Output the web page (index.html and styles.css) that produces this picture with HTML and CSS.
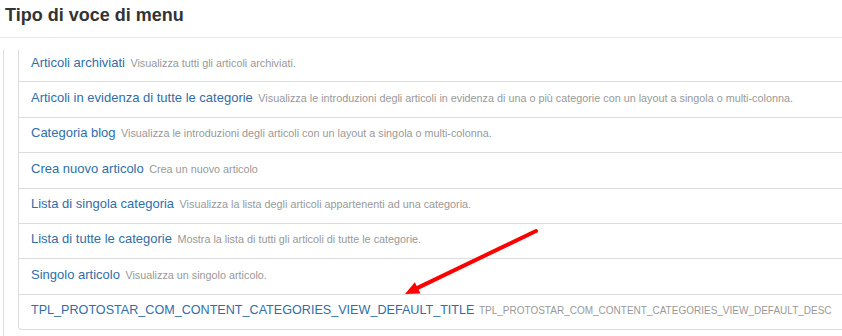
FILE: index.html
```html
<!DOCTYPE html>
<html lang="it">
<head>
<meta charset="utf-8">
<title>Tipo di voce di menu</title>
<link rel="stylesheet" href="styles.css">
</head>
<body>
<div class="page">
  <h3 class="modal-title">Tipo di voce di menu</h3>
  <div class="outer">
    <ul class="menu-types">
      <li class="item first"><a class="link" href="#">Articoli archiviati</a> <small class="desc">Visualizza tutti gli articoli archiviati.</small></li>
      <li class="item"><a class="link" href="#">Articoli in evidenza di tutte le categorie</a> <small class="desc">Visualizza le introduzioni degli articoli in evidenza di una o più categorie con un layout a singola o multi-colonna.</small></li>
      <li class="item"><a class="link" href="#">Categoria blog</a> <small class="desc">Visualizza le introduzioni degli articoli con un layout a singola o multi-colonna.</small></li>
      <li class="item"><a class="link" href="#">Crea nuovo articolo</a> <small class="desc">Crea un nuovo articolo</small></li>
      <li class="item"><a class="link" href="#">Lista di singola categoria</a> <small class="desc">Visualizza la lista degli articoli appartenenti ad una categoria.</small></li>
      <li class="item"><a class="link" href="#">Lista di tutte le categorie</a> <small class="desc">Mostra la lista di tutti gli articoli di tutte le categorie.</small></li>
      <li class="item"><a class="link" href="#">Singolo articolo</a> <small class="desc">Visualizza un singolo articolo.</small></li>
      <li class="item item-key"><a class="link" href="#">TPL_PROTOSTAR_COM_CONTENT_CATEGORIES_VIEW_DEFAULT_TITLE</a> <small class="desc">TPL_PROTOSTAR_COM_CONTENT_CATEGORIES_VIEW_DEFAULT_DESC</small></li>
    </ul>
  </div>
  <svg class="arrow" width="842" height="336" viewBox="0 0 842 336" aria-hidden="true">
    <line x1="536" y1="231" x2="416" y2="288.6" stroke="#ff0000" stroke-width="4" stroke-linecap="round"/>
    <polygon points="405,294 420.5,293.5 414.8,282.3" fill="#ff0000"/>
  </svg>
</div>
</body>
</html>
```

FILE: styles.css
```css
html, body {
  margin: 0;
  padding: 0;
  background: #ffffff;
  overflow: hidden;
}

body {
  width: 842px;
  height: 336px;
  font-family: "Liberation Sans", Arial, Helvetica, sans-serif;
}

.page {
  position: relative;
  width: 842px;
  height: 336px;
  overflow: hidden;
}

.modal-title {
  margin: 0;
  padding: 5px 0 12px 5px;
  font-size: 18px;
  line-height: 20px;
  font-weight: bold;
  color: #333333;
  border-bottom: 1px solid #e8e8e8;
}

.outer {
  margin: 12px 0 0 3px;
  padding-left: 14px;
  border-left: 1px solid #dddddd;
  min-height: 320px;
}

.menu-types {
  list-style: none;
  margin: 0;
  padding: 0;
  border-left: 1px solid #dddddd;
  border-bottom: 1px solid #dddddd;
  border-bottom-left-radius: 4px;
}

.item {
  padding: 6.5px 12px 9.5px 12px;
  font-size: 12.5px;
  line-height: 18.4px;
  height: 18.4px;
  border-top: 1px solid #dddddd;
  white-space: nowrap;
}

.item.first {
  border-top: 0;
  padding-top: 3.5px;
}

.link {
  font-size: 13px;
  line-height: 1;
  color: #2f6ea8;
  text-decoration: none;
}

.desc {
  font-size: 10.8px;
  line-height: 1;
  color: #999999;
  margin-left: 2px;
}

.item-key .link {
  font-size: 12.6px;
}

.item-key .desc {
  font-size: 10px;
  margin-left: 1px;
}

.arrow {
  position: absolute;
  left: 0;
  top: 0;
  pointer-events: none;
}
```
